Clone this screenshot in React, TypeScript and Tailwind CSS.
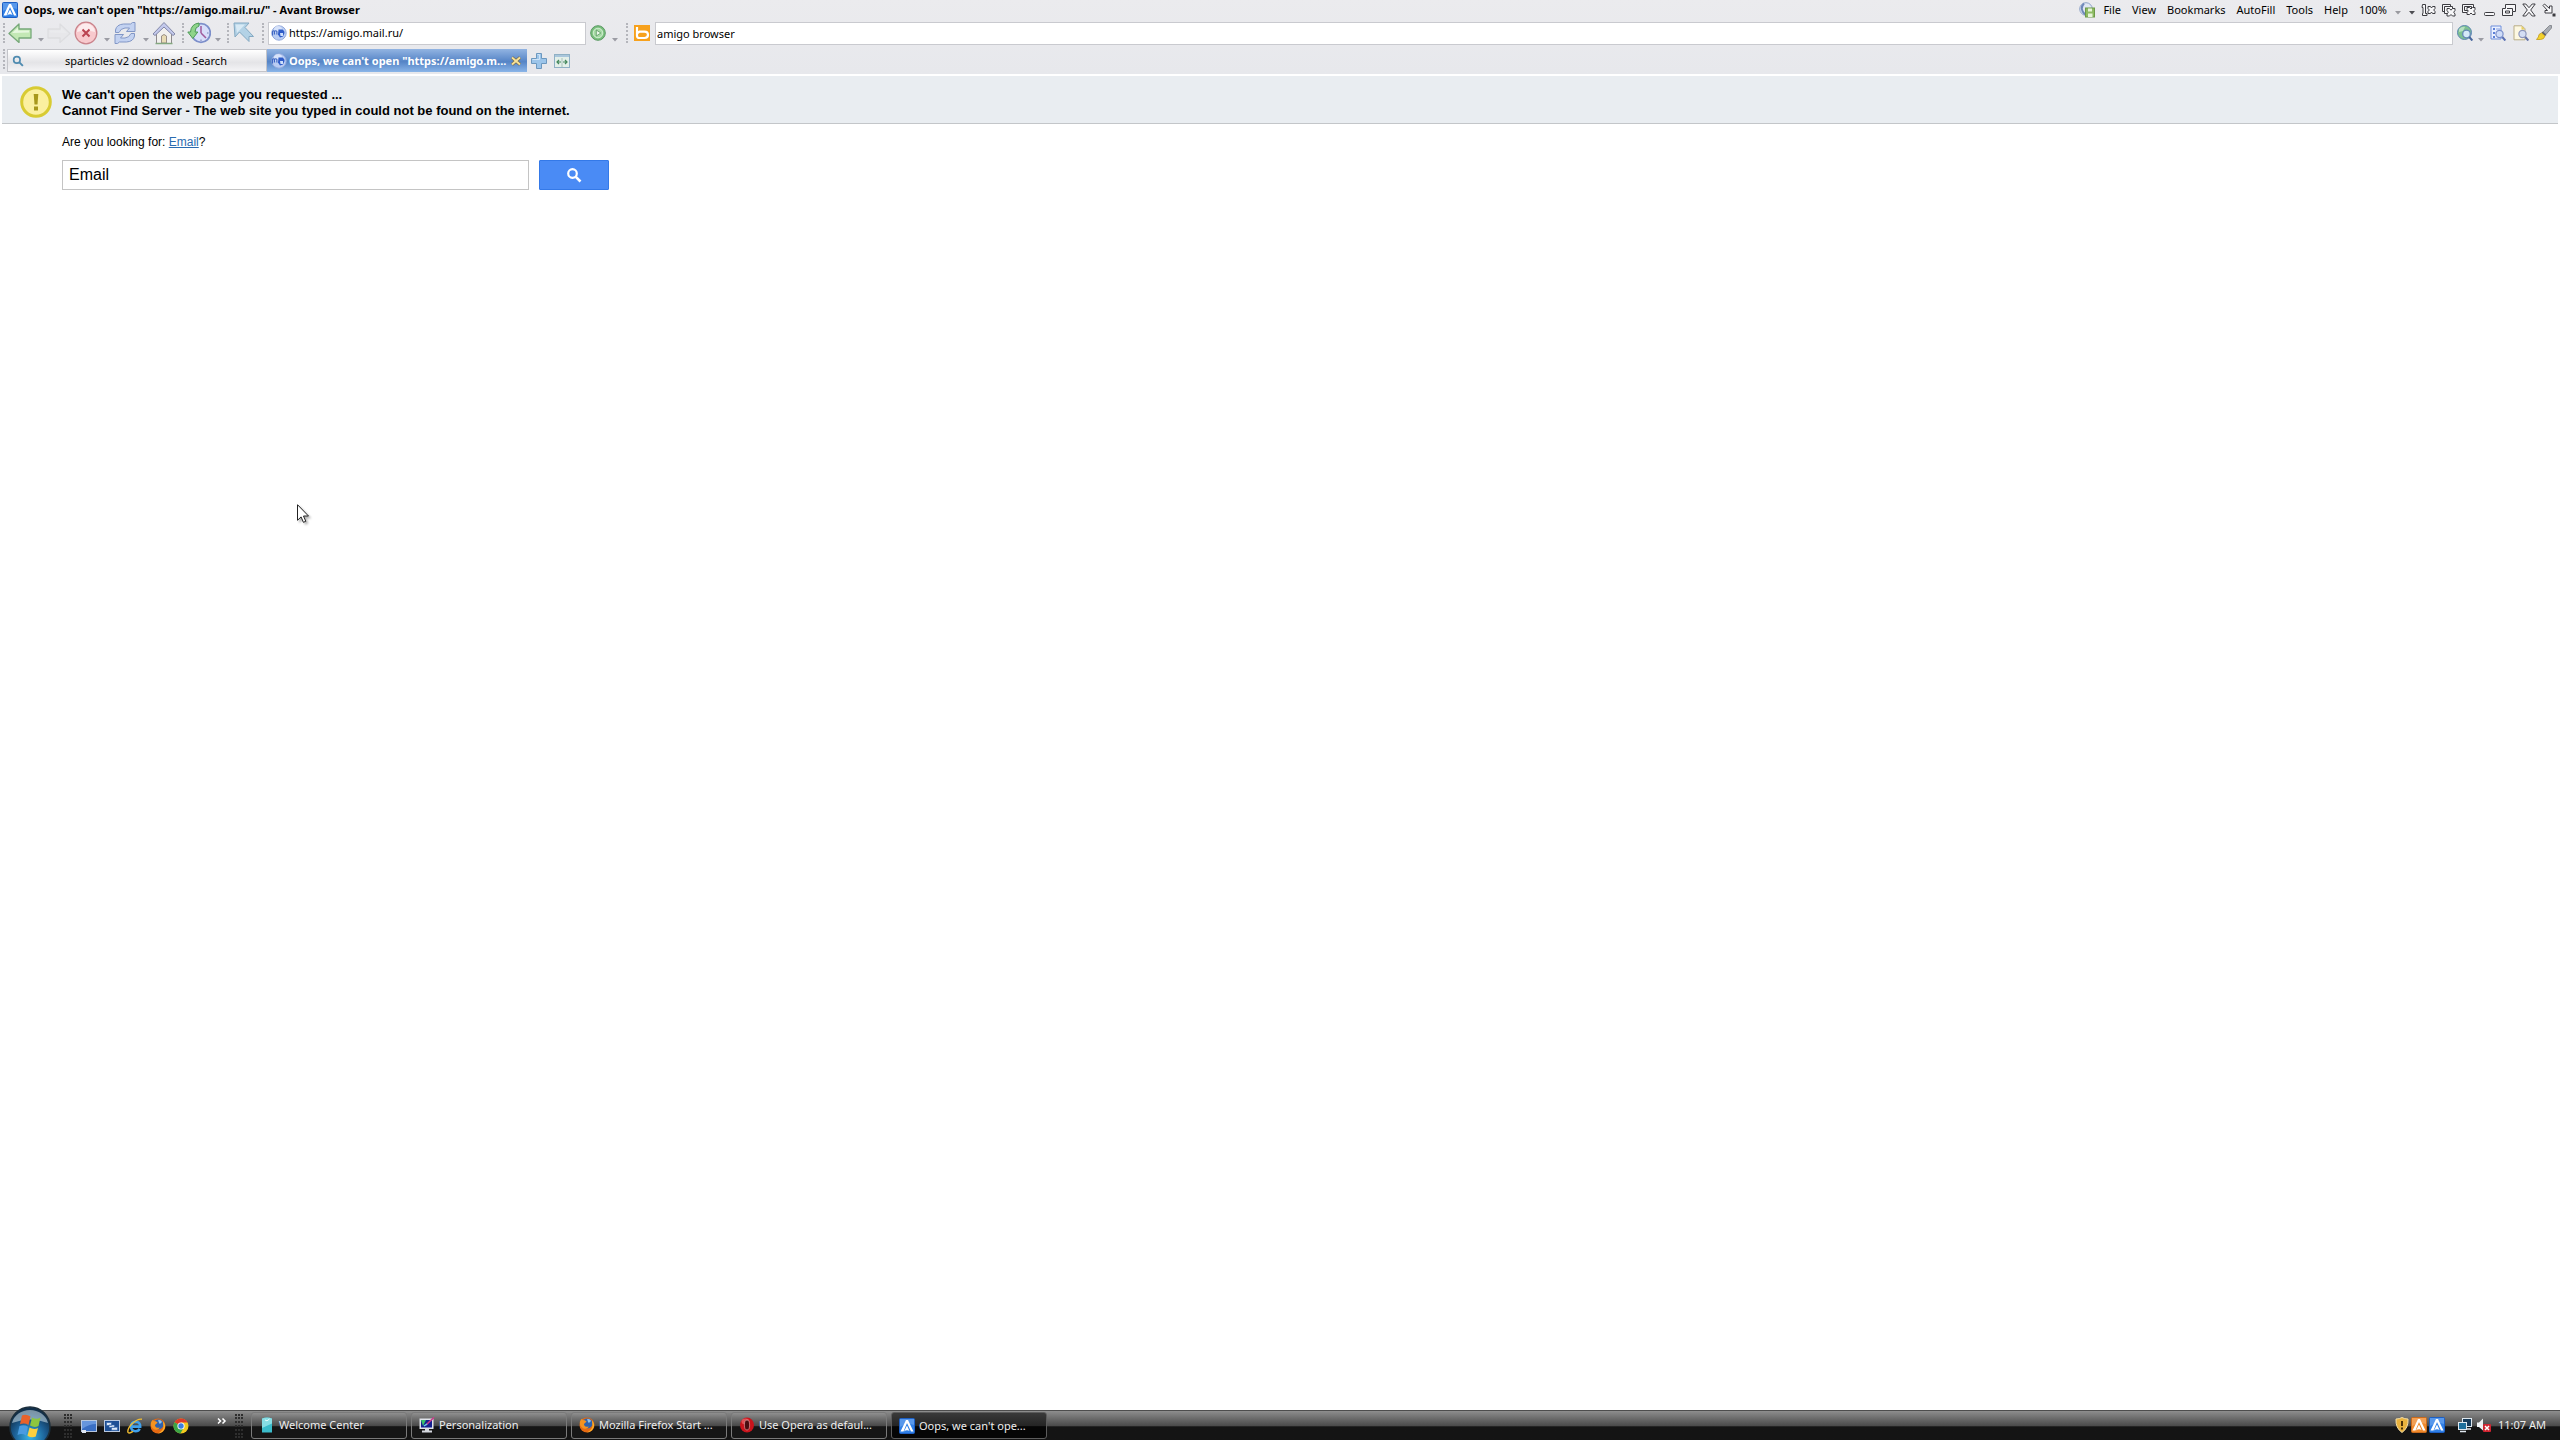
import React, { useState } from 'react';

interface IconProps {
  className?: string;
}

interface TaskItem {
  label: string;
  icon: React.ReactNode;
  active?: boolean;
}

/* ---------- Brand icons ---------- */

function AvantIcon({ className = 'size-4', orange = false }: IconProps & { orange?: boolean }) {
  return (
    <svg viewBox="0 0 16 16" className={`shrink-0 ${className}`}>
      <rect x="0.5" y="0.5" width="15" height="15" rx="1" fill={orange ? '#f0892b' : '#2f7fe6'} stroke={orange ? '#c96a1c' : '#1d5fc4'} />
      <path d="M1 1h14v6Q8 4 1 9z" fill="#fff" opacity="0.2" />
      <path d="M7 2h2l5.500 11.500h-2.500L8 5 4.500 13.500H1.500z" fill="#fff" />
      <path d="M8 7.600l2.500 5.500q-2.500-2-5.500.400z" fill="#fff" />
    </svg>
  );
}

function PageIcon() {
  return (
    <svg viewBox="0 0 16 16" className="size-4 shrink-0">
      <circle cx="8" cy="8" r="7.2" fill="#b9cdf3" stroke="#93a9dc" />
      <circle cx="7" cy="5" r="4" fill="#e4edfc" opacity="0.7" />
      <path d="M1.500 10.500V6.500q1-1.500 2 0v3M3.500 6.500q1.200-1.500 2.400 0v3" fill="none" stroke="#3f67c4" strokeWidth="1.200" />
      <path d="M7.500 4.500h4q2.200 1 2 3.500l-1.500 3.500-3 1-2-3z" fill="#2f5cc8" />
      <path d="M9 8h3v3H9.500z" fill="#cfe0fb" />
    </svg>
  );
}

function BingIcon() {
  return (
    <svg viewBox="0 0 16 16" className="size-4 shrink-0">
      <rect width="16" height="16" fill="#f7a11c" />
      <path d="M3 2v9q0 2 2.500 2h5q3.500 0 3.500-3.200t-3.500-3.200h-5L3.500 8" fill="none" stroke="#fff" strokeWidth="2.200" />
    </svg>
  );
}

function FirefoxIcon() {
  return (
    <svg viewBox="0 0 16 16" className="size-4 shrink-0">
      <circle cx="8" cy="8" r="7.5" fill="#e66a12" />
      <circle cx="8.4" cy="6.4" r="5" fill="#2f62ad" />
      <path d="M8 2.2q3-.6 4 1.6-.6 2-2.6 2z" fill="#8fc4ee" />
      <path d="M.8 5Q1.4 2.6 3.2 1.4L3.6 3l2.2.2 1.8 1.4-1.8 1.6q-1.4.6-.6 2 1.4 2.4 4.6 1.2-1.4 3.4-5.4 2Q.4 9.6.8 5z" fill="#f59321" />
      <path d="M13 3.4q3 3.4 1.6 7.2-2 4.6-6.6 4.8 5.4-3 5.6-7z" fill="#f9b52c" />
    </svg>
  );
}

function ChromeIcon() {
  return (
    <svg viewBox="0 0 16 16" className="size-4 shrink-0">
      <circle cx="8" cy="8" r="7.5" fill="#f2c91e" />
      <path d="M8 8L1.5 4.2A7.5 7.5 0 0 1 14.6 4.6H8z" fill="#dd3a2a" />
      <path d="M1.5 4.2A7.5 7.5 0 0 0 7.4 15.5L10.8 9.8 8 8z" fill="#3ba447" />
      <circle cx="8" cy="8" r="3.6" fill="#fff" />
      <circle cx="8" cy="8" r="2.7" fill="#3b7fe0" />
    </svg>
  );
}

function ExplorerIcon() {
  return (
    <svg viewBox="0 0 16 16" className="size-4 shrink-0">
      <path d="M4 8.6h9.2q.2-4.6-4.6-4.8Q4 4 4 8.8q.2 4.4 4.6 4.4 3 0 4-2.4" fill="none" stroke="#3fa0ec" strokeWidth="2.6" />
      <path d="M15 1.2Q10.6.6 5 5.8 0 11 1 14.4q1.4 1.6 5-1" fill="none" stroke="#f1bd32" strokeWidth="1.4" />
    </svg>
  );
}

function DesktopIcon() {
  return (
    <svg viewBox="0 0 16 16" className="size-4 shrink-0">
      <rect x="0.5" y="2.5" width="15" height="11" fill="#3a6fc4" stroke="#b9c8de" />
      <path d="M1 3h14v3Q8 6 1 11z" fill="#7ba7e8" opacity="0.7" />
      <rect x="1" y="12" width="4" height="3" fill="#dfe7f3" />
    </svg>
  );
}

function SwitcherIcon() {
  return (
    <svg viewBox="0 0 16 16" className="size-4 shrink-0">
      <rect x="0.5" y="2.5" width="15" height="11" fill="#1d4f95" stroke="#b9c8de" />
      <path d="M2.5 4.5h5v3h-5zM5 7h5.500v2.500H5zM7.500 9.200h6v3h-6z" fill="#dce9f9" stroke="#2b5ea6" strokeWidth="0.6" />
    </svg>
  );
}

function OperaIcon() {
  return (
    <svg viewBox="0 0 16 16" className="size-4 shrink-0">
      <ellipse cx="8" cy="8" rx="7" ry="7.600" fill="#c9141c" />
      <ellipse cx="6.500" cy="4.500" rx="4" ry="3" fill="#f0787c" opacity="0.6" />
      <ellipse cx="8" cy="8" rx="2.600" ry="5" fill="#4a0c10" stroke="#e5a8aa" strokeWidth="0.6" />
    </svg>
  );
}

function WelcomeIcon() {
  return (
    <svg viewBox="0 0 16 16" className="size-4 shrink-0">
      <path d="M3 1.500q5-2 10 0v14H3z" fill="#3bbccb" />
      <path d="M3 1.500q5-2 10 0v5L3 11z" fill="#a8ecf0" opacity="0.7" />
      <path d="M6 3l2 .8L10.500 2" stroke="#e9ffff" fill="none" />
    </svg>
  );
}

function PersonalizationIcon() {
  return (
    <svg viewBox="0 0 16 16" className="size-4 shrink-0">
      <rect x="0.5" y="1.500" width="14" height="10.500" fill="#dfe3ea" />
      <rect x="2" y="3" width="11" height="7.500" fill="#15208f" />
      <path d="M2 3h5L4 9z" fill="#38c06b" />
      <path d="M7 8l8-7.500" stroke="#c93c8c" strokeWidth="1.600" />
      <path d="M5 9l3-2" stroke="#65d7f0" strokeWidth="1.500" />
      <path d="M6 12h4v1.500h3V15.500H3V13.500h3z" fill="#d5d8df" />
    </svg>
  );
}

/* ---------- Toolbar icons ---------- */

function BackIcon({ className = '' }: IconProps) {
  return (
    <svg viewBox="0 0 24 20" className={`h-5 w-6 ${className}`}>
      <path d="M1 10.500L11 1v5h12v9H11v4.500z" fill="#c3e8b5" stroke="#76a878" strokeWidth="1.300" strokeLinejoin="round" />
      <path d="M4 10l6-5.500V7.500h11v2z" fill="#e6f7df" />
    </svg>
  );
}

function StopIcon() {
  return (
    <svg viewBox="0 0 24 24" className="size-6">
      <circle cx="12" cy="12" r="10.800" fill="#f8c9cd" stroke="#c9828a" strokeWidth="1.300" />
      <path d="M3 11a9 8.500 0 0 1 18 0q-9-3-18 0z" fill="#fdebed" />
      <path d="M8.500 8.500l7 7M15.500 8.500l-7 7" stroke="#bb4250" strokeWidth="2" />
    </svg>
  );
}

function RefreshIcon() {
  return (
    <svg viewBox="0 0 24 24" className="size-6" fill="#c3d2f1" stroke="#8297c6" strokeLinejoin="round">
      <path d="M2.500 11.500V9q1-5.500 8-6h7l2-1.500H22V10.500h-8.500l3-3.500H12q-4.500.5-6 4.500z" />
      <path d="M21.500 12.500V15q-1 5.500-8 6h-7l-2 1.500H2V13.500h8.500l-3 3.500H12q4.500-.5 6-4.500z" />
    </svg>
  );
}

function HomeIcon() {
  return (
    <svg viewBox="0 0 24 24" className="size-6">
      <path d="M4.500 12L12 5l7.500 7v10.500h-15z" fill="#f1f0ee" stroke="#8e8a8c" />
      <path d="M9.500 22v-7q2.500-3 5 0v7z" fill="#e9dcb4" stroke="#9a8f86" />
      <path d="M1 13L12 1.500 23 13l-2 1.500L12 6l-9 8.500z" fill="#c3c9ec" stroke="#8287a8" />
      <path d="M3.500 22.500h17" stroke="#84a880" strokeWidth="1.500" />
    </svg>
  );
}

function HistoryIcon() {
  return (
    <svg viewBox="0 0 24 24" className="size-6">
      <circle cx="14" cy="12" r="9.300" fill="#d8defa" stroke="#7c8fca" strokeWidth="1.800" />
      <path d="M14 12V5M14 12l5 5" stroke="#a05a9a" strokeWidth="1.500" />
      <path d="M20 12h1.500M14 18.500v1.500" stroke="#7480b0" />
      <path d="M12 2q-8 1-8.500 9H.8l5 6.500 5-6.500H8q0-5 4-6z" fill="#8fd48a" stroke="#4d9a58" />
    </svg>
  );
}

function PointerIcon() {
  return (
    <svg viewBox="0 0 24 24" className="size-6">
      <path d="M2 2h15l-4 4.500 8.500 9-4.500 0 0 5-9.500-9.500L3 16z" fill="#b3d2e6" stroke="#84a9c2" strokeLinejoin="round" />
      <path d="M3.500 3.500H13L5 12z" fill="#d8eaf5" />
    </svg>
  );
}

function GoIcon() {
  return (
    <svg viewBox="0 0 16 16" className="size-4">
      <circle cx="8" cy="8" r="7.300" fill="#79bf7d" stroke="#5b9a63" />
      <circle cx="8" cy="8" r="4.800" fill="#a6dba5" stroke="#e3f5e2" strokeWidth="0.800" />
      <path d="M6.300 5l4.500 3-4.500 3z" fill="#e9f9e8" stroke="#4c8a55" strokeWidth="0.700" />
    </svg>
  );
}

function PlusIcon() {
  return (
    <svg viewBox="0 0 16 16" className="size-4">
      <path d="M5.500.5h5v5h5v5h-5v5h-5v-5h-5v-5h5z" fill="#9cc5ea" stroke="#6c98bf" />
      <path d="M6.500 1.500h2v5h-7" fill="none" stroke="#cfe4f7" />
    </svg>
  );
}

function TabListIcon() {
  return (
    <svg viewBox="0 0 16 14" className="h-3.5 w-4">
      <rect x="0.5" y="0.5" width="15" height="13" fill="#e3efe9" stroke="#8fb0c4" />
      <path d="M1 2h14" stroke="#a9c6dc" strokeWidth="2" />
      <path d="M3 8h4M9 8h4M5 6L3 8l2 2M11 6l2 2-2 2" stroke="#45885c" fill="none" strokeWidth="1.200" />
      <path d="M8 4v9" stroke="#9db9ad" strokeWidth="0.800" />
    </svg>
  );
}

function SearchGlobeIcon() {
  return (
    <svg viewBox="0 0 16 16" className="size-4">
      <circle cx="7.500" cy="7.500" r="7" fill="#7ec191" stroke="#5c86b4" />
      <path d="M2 4q3-3 6-2L6 6 2 7z" fill="#b7e0c0" />
      <circle cx="9.500" cy="9" r="3.800" fill="#d5e9f8" stroke="#6588b8" strokeWidth="1.300" />
      <path d="M12.300 12l3 3.500" stroke="#47659c" strokeWidth="2" />
    </svg>
  );
}

function SearchListIcon() {
  return (
    <svg viewBox="0 0 16 16" className="size-4">
      <path d="M1 1h10v13H1z" fill="#eaf0ff" stroke="#6f8fdb" />
      <path d="M3 3h2v2H3zM3 7h2v2H3zM3 11h2v2H3z" fill="#5c7fd6" />
      <path d="M6 4h4" stroke="#8aa3e2" />
      <circle cx="9.500" cy="9" r="3.600" fill="#cfdcf8" stroke="#7b90cb" strokeWidth="1.200" />
      <path d="M12.300 12l3 3.500" stroke="#5a70b4" strokeWidth="2" />
    </svg>
  );
}

function SearchPageIcon() {
  return (
    <svg viewBox="0 0 16 16" className="size-4">
      <path d="M1 .8h8l3 3v11H1z" fill="#fdf8e2" stroke="#b9ad86" />
      <path d="M8.500 1v3.500H12z" fill="#e8cf5a" />
      <circle cx="9.500" cy="9" r="3.600" fill="#d4def4" stroke="#8d97bd" strokeWidth="1.200" />
      <path d="M12.300 12l3 3.500" stroke="#6574a8" strokeWidth="2" />
    </svg>
  );
}

function BrushIcon() {
  return (
    <svg viewBox="0 0 16 16" className="size-4">
      <path d="M15.500.5L13.500.5 7 7l3 2.500L15.500 3z" fill="#a9adb4" stroke="#6d7178" strokeWidth="0.700" />
      <path d="M6.500 6.500l4 3.500-1.500 1L5.500 8z" fill="#5a5d66" />
      <path d="M5.500 8L9 11q-1 3.500-4.500 3.500H.5Q3 12 3 9.500z" fill="#f3d22c" stroke="#c29a1c" strokeWidth="0.800" />
    </svg>
  );
}

function OfflineIcon() {
  return (
    <svg viewBox="0 0 16 16" className="size-4">
      <circle cx="7" cy="7" r="6.300" fill="#dfe6f3" stroke="#8fa3c6" />
      <path d="M5 1.500q-5 5 1 11" stroke="#6d87b8" strokeWidth="2" fill="none" />
      <rect x="6.500" y="6" width="9" height="9" fill="#8dbb62" stroke="#6d9a48" />
      <path d="M9 6.500h4V9.500H9zM9 11.500h4.500V15H9z" fill="#e6f3d9" />
    </svg>
  );
}

const strokeIcon = { fill: '#f7f7f9', stroke: '#3d3d42', strokeWidth: 1 };

function PageControls() {
  return (
    <div className="flex items-center gap-1">
      <button aria-label="Single page mode">
        <svg viewBox="0 0 16 14" className="h-3.5 w-4" {...strokeIcon}>
          <path d="M1.500 1.500h3v9h1.500v2H1.500v-2h.5v-6h-1z" />
          <path d="M7 3.500l2.500 0 1 1.500 1-1.500H14v2L12.700 7l1.300 1.500v2h-2.500l-1-1.500-1 1.500H7v-2L8.300 7 7 5.500z" />
        </svg>
      </button>
      <button aria-label="Close all pages">
        <svg viewBox="0 0 16 14" className="h-3.5 w-4" {...strokeIcon}>
          <path d="M1.500 1.500h8v7h-8z" />
          <path d="M3.500 3.500h8v7h-8z" />
          <path d="M6 5.500h2.500l1.500 1.700 1.500-1.700H14v2L12.700 9.200l1.300 1.800v2h-2.500L10 11.500 8.500 13H6v-2l1.300-1.800L6 7.500z" />
        </svg>
      </button>
      <button aria-label="Close other pages">
        <svg viewBox="0 0 16 14" className="h-3.5 w-4" {...strokeIcon}>
          <path d="M1.500 1.500h11v8h-11z" />
          <path d="M3.500 3.500h7v4h-7z" />
          <path d="M6 4.500h2.500L10 6l1.500-1.500H14v2L12.700 8l1.300 1.500v2h-2.500L10 10l-1.500 1.500H6v-2L7.300 8 6 6.500z" />
        </svg>
      </button>
      <button aria-label="Minimize">
        <svg viewBox="0 0 16 14" className="h-3.5 w-4" {...strokeIcon}>
          <rect x="3.500" y="9.500" width="10" height="3" rx="1" />
        </svg>
      </button>
      <button aria-label="Restore">
        <svg viewBox="0 0 16 14" className="h-3.5 w-4" {...strokeIcon}>
          <path d="M4.500 1.500h10v7h-3v4h-10v-7h3z" />
          <path d="M6 5.500h5.500v3M4.500 8h4v2h-4z" />
        </svg>
      </button>
      <button aria-label="Close window">
        <svg viewBox="0 0 16 14" className="h-3.5 w-4" {...strokeIcon}>
          <path d="M1.800 1h3L8 4.700 11.200 1h3L9.700 7l4.500 6h-3L8 9.300 4.800 13h-3L6.300 7z" />
        </svg>
      </button>
      <button aria-label="Hide to tray">
        <svg viewBox="0 0 16 14" className="h-3.5 w-4" {...strokeIcon}>
          <path d="M2 2.500L3.500 1l5 4.500V3H11v7H4V7.500h2.500z" />
          <rect x="12" y="11" width="2" height="2" fill="#3d3d42" />
        </svg>
      </button>
    </div>
  );
}

function Magnifier({ className = '' }: IconProps) {
  return (
    <svg viewBox="0 0 16 16" className={`shrink-0 ${className}`} fill="none" stroke="currentColor">
      <circle cx="6.500" cy="6.500" r="4.300" strokeWidth="2.200" />
      <path d="M9.800 9.800l4.700 4.700" strokeWidth="2.600" />
    </svg>
  );
}

/* ---------- Small shared pieces ---------- */

function Caret({ className = '' }: IconProps) {
  return (
    <button aria-label="More" className={`w-1.5 shrink-0 ${className}`}>
      <svg viewBox="0 0 6 4" className="h-1 w-1.5">
        <path d="M0 0h6L3 3.500z" fill="currentColor" />
      </svg>
    </button>
  );
}

function Grip({ className = '' }: IconProps) {
  return <span className={`h-5 w-0 shrink-0 border-l-2 border-dotted border-[#b4b5bb] ${className}`} />;
}

function TaskbarGrip({ className = '' }: IconProps) {
  return (
    <span className={`flex shrink-0 gap-px ${className}`}>
      <span className="h-6 border-l-2 border-dotted border-[#2e2e2e]" />
      <span className="h-6 border-l-2 border-dotted border-[#2e2e2e]" />
      <span className="h-6 border-l-2 border-dotted border-[#2e2e2e]" />
    </span>
  );
}

/* ---------- Browser chrome ---------- */

const menus = ['File', 'View', 'Bookmarks', 'AutoFill', 'Tools', 'Help', '100%'];

function TitleBar() {
  return (
    <div className="flex h-[21px] items-center justify-between pr-[3px] pb-0.5 pl-0.5">
      <div className="flex items-center gap-1.5">
        <AvantIcon />
        <h1 className="font-bold whitespace-nowrap">Oops, we can't open "https://amigo.mail.ru/" - Avant Browser</h1>
      </div>
      <div className="flex items-center">
        <OfflineIcon />
        <nav className="ml-2 flex gap-[11px]">
          {menus.map((menu) => (
            <button key={menu}>{menu}</button>
          ))}
        </nav>
        <Caret className="mt-1.5 ml-2 text-[#9a9aa0]" />
        <Caret className="mt-1.5 mr-1.5 ml-2 text-[#4c4c52]" />
        <PageControls />
      </div>
    </div>
  );
}

function Toolbar() {
  const [url, setUrl] = useState('https://amigo.mail.ru/');
  const [query, setQuery] = useState('amigo browser');

  return (
    <div className="flex h-6 items-center pr-2 pl-[3px] text-[#9b9ca4]">
      <Grip />
      <button aria-label="Back" className="ml-[3px]"><BackIcon /></button>
      <Caret className="mt-3.5 ml-1.5" />
      <button aria-label="Forward" className="ml-[3px] opacity-15 grayscale"><BackIcon className="-scale-x-100" /></button>
      <button aria-label="Stop" className="ml-[3px]"><StopIcon /></button>
      <Caret className="mt-3.5 ml-1.5" />
      <button aria-label="Refresh" className="ml-[3px]"><RefreshIcon /></button>
      <Caret className="mt-3.5 ml-1.5" />
      <button aria-label="Home" className="ml-[3px]"><HomeIcon /></button>
      <Grip className="ml-1.5" />
      <button aria-label="History" className="ml-[3px]"><HistoryIcon /></button>
      <Caret className="mt-3.5 ml-1" />
      <Grip className="ml-1.5" />
      <button aria-label="Drag to open" className="ml-[3px]"><PointerIcon /></button>
      <Grip className="ml-1.5" />
      <div className="ml-1 flex h-[23px] w-[318px] items-center border border-[#c9cacf] bg-white pl-0.5">
        <PageIcon />
        <input
          aria-label="Address"
          value={url}
          onChange={(e) => setUrl(e.target.value)}
          className="min-w-0 flex-1 bg-transparent pl-0.5 text-black outline-none"
        />
      </div>
      <button aria-label="Go" className="ml-1"><GoIcon /></button>
      <Caret className="mt-3.5 ml-1.5" />
      <Grip className="ml-2" />
      <button aria-label="Bing" className="ml-1.5"><BingIcon /></button>
      <input
        aria-label="Search the web"
        value={query}
        onChange={(e) => setQuery(e.target.value)}
        className="ml-[5px] h-[23px] min-w-0 flex-1 border border-[#c9cacf] bg-white pl-px text-black outline-none"
      />
      <button aria-label="Search in globe" className="ml-1"><SearchGlobeIcon /></button>
      <Caret className="mt-3.5 ml-[5px]" />
      <div className="ml-1.5 flex gap-[7px]">
        <button aria-label="Find in list"><SearchListIcon /></button>
        <button aria-label="Find in page"><SearchPageIcon /></button>
        <button aria-label="Highlight"><BrushIcon /></button>
      </div>
    </div>
  );
}

function TabBar() {
  return (
    <div className="mt-1 flex h-[25px] items-start pl-[3px]">
      <Grip />
      <button className="ml-0.5 flex h-[23px] w-[260px] items-center border border-[#c3c4c9] bg-linear-to-b from-white via-[#e4e4e7] via-60% to-[#f4f4f6] px-1">
        <Magnifier className="size-3 text-[#4f8bb0]" />
        <span className="flex-1 pl-1.5 text-center">sparticles v2 download - Search</span>
      </button>
      <div className="flex h-[23px] w-[260px] items-center bg-linear-to-b from-[#92b4e2] via-[#5584c6] via-55% to-[#8ab5e8] pr-1.5 pl-1">
        <button className="flex min-w-0 flex-1 items-center gap-0.5 font-bold text-white">
          <PageIcon />
          <span className="whitespace-nowrap">Oops, we can't open "https://amigo.m...</span>
        </button>
        <button aria-label="Close tab">
          <svg viewBox="0 0 10 10" className="size-2.5">
            <path d="M1 1.500l8 7M9 1.500l-8 7" stroke="#77643a" strokeWidth="3" />
            <path d="M1 1.500l8 7M9 1.500l-8 7" stroke="#f6e29a" strokeWidth="2" />
          </svg>
        </button>
      </div>
      <div className="ml-1 flex h-[23px] items-center gap-[7px]">
        <button aria-label="New tab"><PlusIcon /></button>
        <button aria-label="Tab list"><TabListIcon /></button>
      </div>
    </div>
  );
}

/* ---------- Page ---------- */

function ErrorPage() {
  const [term, setTerm] = useState('Email');

  return (
    <main className="relative flex-1 bg-white px-0.5 font-['Liberation_Sans',Arial,sans-serif] text-black">
      <div className="flex h-12 items-center gap-2.5 border-b border-[#c3c6c9] bg-[#e9edf1] pt-1 pl-[18px]">
        <svg viewBox="0 0 32 32" className="size-8">
          <circle cx="16" cy="16" r="14.300" fill="#fbf0a0" stroke="#d8cb33" strokeWidth="3" />
          <path d="M13.700 8h4.600l-.8 10.500h-3z" fill="#a8981c" />
          <rect x="14" y="20.500" width="4" height="4" fill="#a8981c" />
        </svg>
        <div className="pt-0.5 text-[13px] leading-4 font-bold">
          <p>We can't open the web page you requested ...</p>
          <p>Cannot Find Server - The web site you typed in could not be found on the internet.</p>
        </div>
      </div>
      <div className="pt-2.5 pl-[60px]">
        <p className="text-xs leading-4">
          Are you looking for: <a href="#email" className="text-[#2b6cb0] underline">Email</a>?
        </p>
        <form className="mt-2.5 flex gap-2.5" onSubmit={(e) => e.preventDefault()}>
          <input
            aria-label="Search term"
            value={term}
            onChange={(e) => setTerm(e.target.value)}
            className="h-[30px] w-[467px] border border-[#c4c4c4] px-1.5 text-base outline-none"
          />
          <button aria-label="Search" className="flex h-[30px] w-[70px] items-center justify-center rounded-[1px] border border-[#3479e8] bg-[#4a8bf5] text-white">
            <Magnifier className="size-4" />
          </button>
        </form>
      </div>
      <svg viewBox="0 0 12 19" className="pointer-events-none absolute top-[428px] left-[297px] h-[19px] w-3 drop-shadow-[2px_2px_1px_rgba(0,0,0,0.3)]">
        <path d="M.5.7v15.600l3.600-3.400 2.300 5.400 2.400-1-2.300-5.300h5z" fill="#fff" stroke="#222" />
      </svg>
    </main>
  );
}

/* ---------- Taskbar ---------- */

const tasks: TaskItem[] = [
  { label: 'Welcome Center', icon: <WelcomeIcon /> },
  { label: 'Personalization', icon: <PersonalizationIcon /> },
  { label: 'Mozilla Firefox Start ...', icon: <FirefoxIcon /> },
  { label: 'Use Opera as defaul...', icon: <OperaIcon /> },
  { label: "Oops, we can't ope...", icon: <AvantIcon />, active: true },
];

function StartOrb() {
  return (
    <button aria-label="Start" className="absolute bottom-0 left-2 h-[34px] w-11 overflow-hidden">
      <svg viewBox="0 0 44 34" className="h-[34px] w-11">
        <defs>
          <radialGradient id="orb" cx="50%" cy="75%" r="65%">
            <stop offset="0" stopColor="#39b5e6" />
            <stop offset="0.6" stopColor="#1c5f95" />
            <stop offset="1" stopColor="#11304c" />
          </radialGradient>
        </defs>
        <circle cx="22" cy="21" r="20" fill="url(#orb)" stroke="#1c2f3c" strokeWidth="1.500" />
        <path d="M4 17a18.500 17 0 0 1 36 0q-18-7-36 0z" fill="#d4e6ef" opacity="0.55" />
        <path d="M14 9.500q4-2 8.500 1L20.500 19q-4-2.500-8.500-.8z" fill="#e8622a" />
        <path d="M24 11.500q4.500 2.500 8.500 0L30.500 20q-4 2-8.500-.5z" fill="#8ec63f" />
        <path d="M11.500 20q4.500-1.800 8.500.7L18 29.500q-4-2.500-8.500-.5z" fill="#4a9be0" />
        <path d="M21.500 21.500q4.500 2.500 8.500.5l-2.200 8.500q-4 2-8.300-.8z" fill="#fcd03e" />
      </svg>
    </button>
  );
}

function Tray() {
  return (
    <div className="ml-auto flex items-center pr-3.5 pb-0.5">
      <svg viewBox="0 0 14 16" className="h-4 w-3.5">
        <path d="M1 2q3.500 0 6-1.500Q9.500 2 13 2q.6 9-6 13.500Q.4 11 1 2z" fill="#e9b23d" stroke="#f7dfa4" />
        <path d="M7 4v5M7 10.500v2" stroke="#4c3208" strokeWidth="2" />
      </svg>
      <AvantIcon orange className="ml-0.5 size-4" />
      <AvantIcon className="ml-0.5 size-4" />
      <svg viewBox="0 0 16 16" className="ml-3 size-4">
        <rect x="5.500" y="1.500" width="9" height="8" fill="#173a58" stroke="#dfe8ef" />
        <rect x="1.500" y="5.500" width="8" height="7" fill="#1e6f9c" stroke="#dfe8ef" />
        <path d="M3 14.500h6M10 12h4" stroke="#dfe8ef" strokeWidth="1.500" />
      </svg>
      <svg viewBox="0 0 16 16" className="ml-[3px] size-4">
        <path d="M1 5.500h2L7 1.500v12L3 10H1z" fill="#eef1f3" />
        <rect x="7" y="7" width="8" height="8" rx="1" fill="#cf2430" />
        <path d="M9 9l4 4M13 9l-4 4" stroke="#fff" strokeWidth="1.500" />
      </svg>
      <time className="ml-1.5 whitespace-nowrap">11:07 AM</time>
    </div>
  );
}

function Taskbar() {
  return (
    <footer className="relative flex h-[30px] items-center border-t border-[#4d4d4d] bg-linear-to-b from-[#8e8e8e] from-0% via-[#4c4c4c] via-50% to-[#141414] to-55% text-[#eeeeee]">
      <StartOrb />
      <TaskbarGrip className="ml-16" />
      <div className="ml-[9px] flex gap-[7px]">
        <button aria-label="Show desktop"><DesktopIcon /></button>
        <button aria-label="Switch windows"><SwitcherIcon /></button>
        <button aria-label="Internet Explorer"><ExplorerIcon /></button>
        <button aria-label="Firefox"><FirefoxIcon /></button>
        <button aria-label="Chrome"><ChromeIcon /></button>
      </div>
      <button aria-label="More shortcuts" className="mb-2.5 ml-7">
        <svg viewBox="0 0 10 6" className="h-1.5 w-2.5" fill="none" stroke="#fff" strokeWidth="1.500">
          <path d="M1 .5L3.500 3 1 5.500M5.500.5L8 3 5.500 5.500" />
        </svg>
      </button>
      <TaskbarGrip className="ml-2" />
      <div className="ml-2 flex gap-1">
        {tasks.map((task) => (
          <button
            key={task.label}
            className={`flex h-[27px] w-[156px] items-center gap-1 rounded-[3px] border px-[7px] whitespace-nowrap ${
              task.active
                ? 'border-[#5c5c5c] bg-linear-to-b from-[#3a3a3a] via-[#252525] via-50% to-[#050505] to-55%'
                : 'border-[#7a7a7a] bg-linear-to-b from-[#8f8f8f] via-[#4a4a4a] via-50% to-[#161616] to-55% pb-0.5'
            }`}
          >
            {task.icon}
            <span>{task.label}</span>
          </button>
        ))}
      </div>
      <Tray />
    </footer>
  );
}

export default function App() {
  return (
    <div className="flex min-h-screen flex-col bg-white font-['Noto_Sans','Open_Sans',sans-serif] text-[11px] leading-4 text-black">
      <header className="border-b-2 border-white bg-linear-to-b from-[#ebebee] to-[#e7e8ec]">
        <TitleBar />
        <Toolbar />
        <TabBar />
      </header>
      <ErrorPage />
      <Taskbar />
    </div>
  );
}
